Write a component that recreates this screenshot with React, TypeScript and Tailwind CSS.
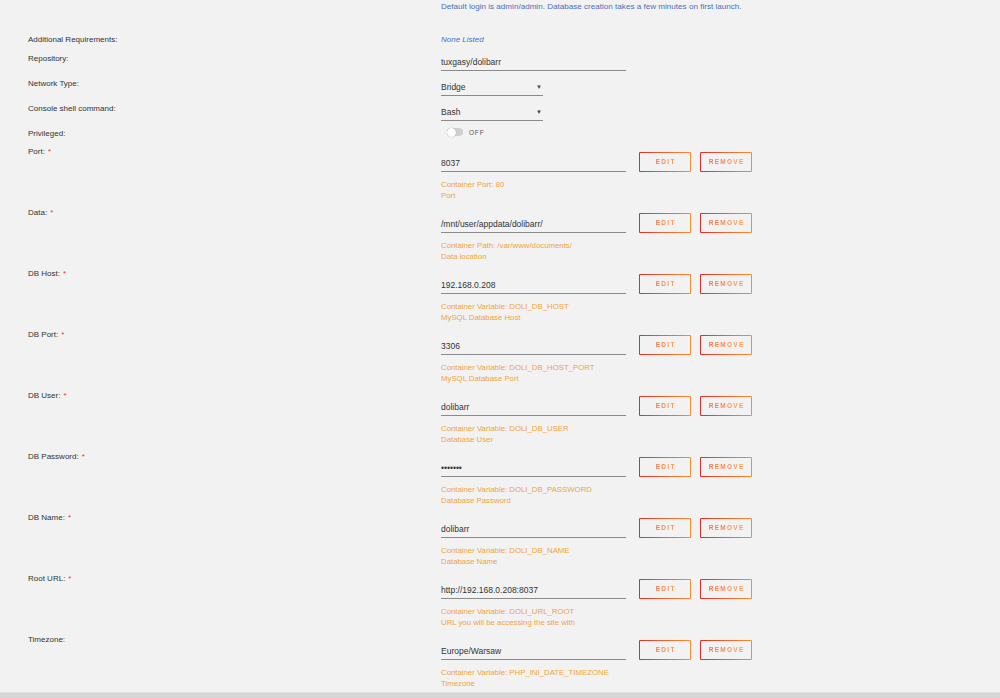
import React from "react";

type Cfg = {
  label: string;
  value: string;
  line1: string;
  line2: string;
  required?: boolean;
};

const configs: Cfg[] = [
  { label: "Port:", value: "8037", line1: "Container Port: 80", line2: "Port", required: true },
  { label: "Data:", value: "/mnt/user/appdata/dolibarr/", line1: "Container Path: /var/www/documents/", line2: "Data location", required: true },
  { label: "DB Host:", value: "192.168.0.208", line1: "Container Variable: DOLI_DB_HOST", line2: "MySQL Database Host", required: true },
  { label: "DB Port:", value: "3306", line1: "Container Variable: DOLI_DB_HOST_PORT", line2: "MySQL Database Port", required: true },
  { label: "DB User:", value: "dolibarr", line1: "Container Variable: DOLI_DB_USER", line2: "Database User", required: true },
  { label: "DB Password:", value: "•••••••", line1: "Container Variable: DOLI_DB_PASSWORD", line2: "Database Password", required: true },
  { label: "DB Name:", value: "dolibarr", line1: "Container Variable: DOLI_DB_NAME", line2: "Database Name", required: true },
  { label: "Root URL:", value: "http://192.168.0.208:8037", line1: "Container Variable: DOLI_URL_ROOT", line2: "URL you will be accessing the site with", required: true },
  { label: "Timezone:", value: "Europe/Warsaw", line1: "Container Variable: PHP_INI_DATE_TIMEZONE", line2: "Timezone" },
];

function Label({ text, required }: { text: string; required?: boolean }) {
  return (
    <div className="w-[441px] shrink-0 pl-[28px] pt-px text-[8px] leading-[10px] text-[#333]">
      {text}
      {required && <span className="ml-[3px] text-[#ff2a2a]">*</span>}
    </div>
  );
}

function GradButton({ text }: { text: string }) {
  return (
    <div className="h-[20px] w-[52px] rounded-[1px] bg-linear-to-r from-[#e22828] to-[#ff8c2f] p-px">
      <div className="flex h-full w-full items-center justify-center bg-[#f2f2f2]">
        <span className="bg-linear-to-r from-[#f07048] to-[#ffa050] bg-clip-text pl-[1.3px] text-[6.5px] font-bold tracking-[1.3px] text-transparent">
          {text}
        </span>
      </div>
    </div>
  );
}

function ConfigRow({ c }: { c: Cfg }) {
  return (
    <div className="flex h-[61px]">
      <Label text={c.label} required={c.required} />
      <div className="pt-[6px]">
        <div className="flex items-center">
          <div className="flex h-[20px] w-[185px] items-center border-b border-[#8a8a8a] pt-[3px] text-[8.5px] text-[#333]">
            {c.value}
          </div>
          <div className="ml-[13px] flex gap-[9px]">
            <GradButton text="EDIT" />
            <GradButton text="REMOVE" />
          </div>
        </div>
        <div className="mt-[7px] text-[7.8px] leading-[11px] text-[#f0a43c]">
          <div>{c.line1}</div>
          <div>{c.line2}</div>
        </div>
      </div>
    </div>
  );
}

function SelectBox({ value }: { value: string }) {
  return (
    <div className="flex h-[18px] w-[102px] items-center justify-between border-b border-[#8a8a8a] pt-[2px] text-[8.5px] text-[#333]">
      <span>{value}</span>
      <span className="pr-px text-[6px] text-[#444]">▼</span>
    </div>
  );
}

export default function App() {
  return (
    <div
      className="h-[698px] w-[1000px] overflow-hidden bg-[#f2f2f2]"
      style={{ fontFamily: '"Liberation Sans", Arial, sans-serif' }}
    >
      <div className="h-[692px] overflow-hidden">
        <div className="flex pt-[2px]">
          <div className="w-[441px] shrink-0" />
          <div className="text-[8.1px] leading-[10px] text-[#4a6fc0]">
            Default login is admin/admin. Database creation takes a few minutes on first launch.
          </div>
        </div>

        <div className="mt-[22px] flex h-[19px]">
          <Label text="Additional Requirements:" />
          <div className="pt-px text-[8px] italic leading-[10px] text-[#4a6fc0]">None Listed</div>
        </div>

        <div className="flex h-[25px]">
          <Label text="Repository:" />
          <div className="flex h-[18px] w-[185px] items-center border-b border-[#8a8a8a] pt-[2px] text-[8.5px] text-[#333]">
            tuxgasy/dolibarr
          </div>
        </div>

        <div className="flex h-[25px]">
          <Label text="Network Type:" />
          <SelectBox value="Bridge" />
        </div>

        <div className="flex h-[25px]">
          <Label text="Console shell command:" />
          <SelectBox value="Bash" />
        </div>

        <div className="flex h-[18px]">
          <Label text="Privileged:" />
          <div className="flex items-start pl-[6px]">
            <div className="relative h-[8px] w-[16px] rounded-full bg-[#cfcfcf]">
              <div className="absolute left-0 top-[-0.5px] h-[9px] w-[9px] rounded-full bg-white shadow-[0_0_1px_rgba(0,0,0,0.4)]" />
            </div>
            <span className="ml-[6px] text-[6.5px] leading-[9px] tracking-[0.8px] text-[#555]">OFF</span>
          </div>
        </div>

        {configs.map((c) => (
          <ConfigRow key={c.label} c={c} />
        ))}
      </div>
      <div className="h-[6px] border-t border-[#e2e2e2] bg-[#d6d6d6]" />
    </div>
  );
}
